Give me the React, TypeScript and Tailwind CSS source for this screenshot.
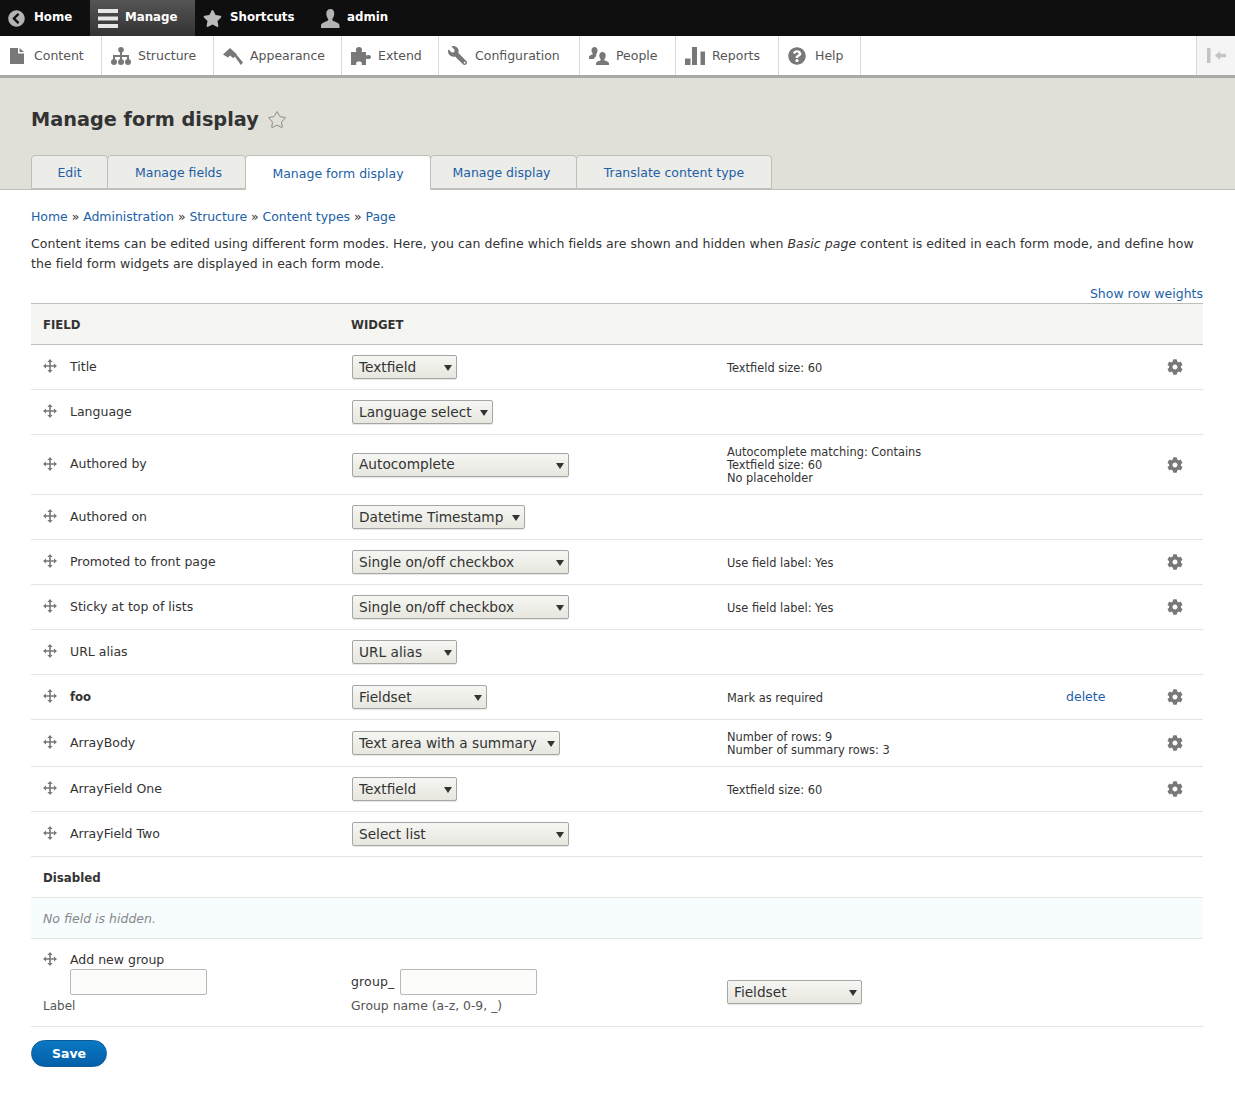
import type { ReactNode } from 'react'
import { Star } from 'lucide-react'
import { FaChevronCircleLeft, FaCog, FaQuestionCircle, FaStar, FaWrench } from 'react-icons/fa'

type Row = {
  name: string
  bold?: boolean
  widget: string
  width: string
  summary?: string[]
  gear?: boolean
  del?: boolean
  height: string
}

const ROWS: Row[] = [
  { name: 'Title', widget: 'Textfield', width: 'w-[105px]', summary: ['Textfield size: 60'], gear: true, height: 'h-[45px]' },
  { name: 'Language', widget: 'Language select', width: 'w-[141px]', height: 'h-[45px]' },
  { name: 'Authored by', widget: 'Autocomplete', width: 'w-[217px]', summary: ['Autocomplete matching: Contains', 'Textfield size: 60', 'No placeholder'], gear: true, height: 'h-[60px]' },
  { name: 'Authored on', widget: 'Datetime Timestamp', width: 'w-[173px]', height: 'h-[45px]' },
  { name: 'Promoted to front page', widget: 'Single on/off checkbox', width: 'w-[217px]', summary: ['Use field label: Yes'], gear: true, height: 'h-[45px]' },
  { name: 'Sticky at top of lists', widget: 'Single on/off checkbox', width: 'w-[217px]', summary: ['Use field label: Yes'], gear: true, height: 'h-[45px]' },
  { name: 'URL alias', widget: 'URL alias', width: 'w-[105px]', height: 'h-[45px]' },
  { name: 'foo', bold: true, widget: 'Fieldset', width: 'w-[135px]', summary: ['Mark as required'], del: true, gear: true, height: 'h-[45px]' },
  { name: 'ArrayBody', widget: 'Text area with a summary', width: 'w-[208px]', summary: ['Number of rows: 9', 'Number of summary rows: 3'], gear: true, height: 'h-[47px]' },
  { name: 'ArrayField One', widget: 'Textfield', width: 'w-[105px]', summary: ['Textfield size: 60'], gear: true, height: 'h-[45px]' },
  { name: 'ArrayField Two', widget: 'Select list', width: 'w-[217px]', height: 'h-[45px]' },
]

const TABS = [
  { label: 'Edit', width: 'w-[77px]' },
  { label: 'Manage fields', width: 'w-[139px] pl-1' },
  { label: 'Manage form display', width: 'w-[186px]', active: true },
  { label: 'Manage display', width: 'w-[147px] pr-1' },
  { label: 'Translate content type', width: 'w-[196px]' },
]

function Handle() {
  return (
    <svg viewBox="0 0 14 14" className="w-[14px] h-[14px] shrink-0 -mt-[2px] text-[#787878]" fill="currentColor">
      <path d="M6.200 3h1.600v3.200H11V4.400L14 7l-3 2.600V7.800H7.800V11h1.800L7 14l-2.600-3h1.800V7.800H3v1.800L0 7l3-2.600v1.800h3.200V3H4.400L7 0l2.600 3z" />
    </svg>
  )
}

function Select({ label, width }: { label: string; width: string }) {
  return (
    <div className={`relative ${width}`}>
      <select
        defaultValue={label}
        className="appearance-none block w-full h-6 pl-[6px] pr-4 border border-[#a6a6a6] rounded-[2px] bg-gradient-to-b from-[#f6f6f3] to-[#e7e7df] text-[13.7px] text-[#333] shadow-[0_1px_1px_rgba(0,0,0,0.1)] [font-family:'DejaVu_Sans',sans-serif]"
      >
        <option>{label}</option>
      </select>
      <span className="absolute right-[5px] top-[10px] w-0 h-0 border-x-[4px] border-x-transparent border-t-[6px] border-t-[#333]" />
    </div>
  )
}

function NavItem({ label, width, icon }: { label: string; width: string; icon: ReactNode }) {
  return (
    <a className={`flex items-center ${width} h-full pl-[9px] border-r border-[#d9d9d9] text-[12.5px] text-[#555]`}>
      <span className="flex items-center w-5 h-5 mr-[7px] shrink-0 text-[#787878]">{icon}</span>
      <span className="pt-px">{label}</span>
    </a>
  )
}

export default function App() {
  return (
    <div className="w-[1235px] min-h-[1109px] bg-white text-[#333] text-[12.5px] [font-family:'DejaVu_Sans',sans-serif]">
      {/* Top bar */}
      <div className="flex h-9 bg-[#0f0f0f] text-white font-bold text-[11.8px]">
        <a className="flex items-center w-[90px] pl-2">
          <FaChevronCircleLeft size={17} className="text-[#b3b3b3] mr-[9px]" />
          Home
        </a>
        <a className="flex items-center w-[105px] pl-2 bg-gradient-to-b from-[#555] to-[#333]">
          <svg viewBox="0 0 20 19" className="w-5 h-[19px] mr-[7px] text-[#e6e6e6]" fill="currentColor">
            <path d="M0 0h20v4H0zM0 7.500h20v4H0zM0 15h20v4H0z" />
          </svg>
          Manage
        </a>
        <a className="flex items-center w-[113px] pl-2">
          <FaStar size={19} className="text-[#bbb] mr-2" />
          Shortcuts
        </a>
        <a className="flex items-center pl-[13px]">
          <svg viewBox="0 0 19 19" className="w-[19px] h-[19px] mr-[7px] text-[#b3b3b3]" fill="currentColor">
            <path d="M9.500 0c2.400 0 3.700 1.700 3.700 4.500 0 2.400-1 4.200-1.800 5.400-.5.900.2 1.800 1.500 2.300 2.900 1.100 5.100 2 5.600 3.800v3H0v-3c.5-1.800 2.700-2.700 5.600-3.800 1.300-.5 2-1.400 1.500-2.300C6.300 8.700 5.300 6.900 5.300 4.500 5.300 1.700 7.100 0 9.500 0z" />
          </svg>
          admin
        </a>
      </div>

      {/* Admin menu */}
      <div className="flex h-[42px] bg-white border-b-[3px] border-[#a9a9a6]">
        <a className="flex items-center w-[102px] h-full pl-[10px] border-r border-[#d9d9d9] text-[12.5px] text-[#555]">
          <svg viewBox="0 0 14 16" className="w-[14px] h-4 mr-[10px] text-[#787878]" fill="currentColor">
            <path d="M0 0h8v5.500h6V16H0zM9.500 0L14 4h-4.500z" />
          </svg>
          <span className="pt-px">Content</span>
        </a>
        <NavItem
          label="Structure"
          width="w-[112px]"
          icon={
            <svg viewBox="0 0 20 18" className="w-5 h-[18px]" fill="currentColor">
              <circle cx="10" cy="2.800" r="2.800" />
              <path d="M9 4h2v4h7v5h-2v-3h-5v3H9v-3H4v3H2V8h7z" />
              <circle cx="3" cy="15" r="3" />
              <circle cx="10" cy="15" r="3" />
              <circle cx="17" cy="15" r="3" />
            </svg>
          }
        />
        <NavItem
          label="Appearance"
          width="w-[128px]"
          icon={
            <svg viewBox="0 0 20 18" className="w-5 h-[18px]" fill="currentColor">
              <path d="M0 7.500L7 1l7 6.500-3.800 3.800-3-2.800-2.200 2z" />
              <path d="M11.800 9.500l1.800-1.700L20 15.500 17.800 18z" />
            </svg>
          }
        />
        <NavItem
          label="Extend"
          width="w-[97px]"
          icon={
            <svg viewBox="0 0 20 18" className="w-5 h-[18px]" fill="currentColor">
              <path d="M0 5h5.500C4.500 3.500 4.500 0 8 0s3.500 3.500 2.500 5H15v3.500c1.500-1 5-.8 5 1.500s-3.500 2.500-5 1.500V18h-4.500c.8-1.500.5-3.500-2.500-3.500S4.700 16.500 5.500 18H0z" />
            </svg>
          }
        />
        <NavItem label="Configuration" width="w-[141px]" icon={<FaWrench size={19} className="-scale-x-100" />} />
        <NavItem
          label="People"
          width="w-[96px]"
          icon={
            <svg viewBox="0 0 20 18" className="w-5 h-[18px]" fill="currentColor">
              <path d="M5.500 0C7.500 0 8.500 1.500 8.500 3.500c0 1.800-.8 3-1.400 3.900-.3.500-.1 1 .5 1.300C6.500 9.600 5.500 10.500 5 12H0V9.800c.3-1 1.500-1.500 3.300-2.200.5-.2.600-.7.300-1.200C3 5.500 2.500 4.500 2.500 3.200 2.500 1.300 3.700 0 5.500 0z" />
              <path d="M13.500 5c2 0 3.200 1.400 3.200 3.500 0 1.700-.7 2.900-1.300 3.700-.4.700.1 1.200 1 1.600 2 .8 3.300 1.200 3.600 2.400V18H7v-1.800c.3-1.200 1.600-1.600 3.600-2.400.9-.4 1.400-.9 1-1.600-.6-.8-1.300-2-1.300-3.700C10.300 6.400 11.500 5 13.500 5z" />
            </svg>
          }
        />
        <NavItem
          label="Reports"
          width="w-[103px]"
          icon={
            <svg viewBox="0 0 20 18" className="w-5 h-[18px]" fill="currentColor">
              <path d="M0 11.500h5.500V18H0zM7 0h5v18H7zM15.500 4.500H20V18h-4.500z" />
            </svg>
          }
        />
        <NavItem label="Help" width="w-[82px]" icon={<FaQuestionCircle size={18} />} />
        <div className="ml-auto flex items-center justify-center w-[39px] h-full bg-[#f5f5f5] border-l border-[#d9d9d9]">
          <svg viewBox="0 0 19 15" className="w-[19px] h-[15px] text-[#c4c4c4]" fill="currentColor">
            <path d="M0 0h3.500v15H0zM8 7.500L13 3v2.700h6v3.600h-6V12z" />
          </svg>
        </div>
      </div>

      {/* Page header */}
      <div className="h-[112px] bg-[#e0e0d8] border-b border-[#bfbfba] pl-[31px]">
        <h1 className="flex items-center h-[77px] pt-[7px] text-[19.300px] font-bold text-[#333]">
          Manage form display
          <Star size={20} strokeWidth={1} className="ml-2 text-[#777]" />
        </h1>
        <div className="flex h-[35px] text-[12.5px]">
          {TABS.map(t => (
            <a
              key={t.label}
              className={`flex items-center justify-center ${t.width} -mr-px pt-[3px] border border-[#bfbfba] rounded-t-[4px] text-[#1d5fa6] ${
                t.active ? 'relative bg-white border-b-white h-[35px]' : 'bg-[#ecece9] h-[34px]'
              }`}
            >
              {t.label}
            </a>
          ))}
        </div>
      </div>

      {/* Content */}
      <div className="px-[31px] w-[1203px] box-content">
        <div className="w-[1172px]">
          <div className="pt-[17px] text-[#333] leading-5 tracking-[-0.05px]">
            <a className="text-[#1d5fa6]">Home</a> » <a className="text-[#1d5fa6]">Administration</a> » <a className="text-[#1d5fa6]">Structure</a> » <a className="text-[#1d5fa6]">Content types</a> » <a className="text-[#1d5fa6]">Page</a>
          </div>
          <p className="mt-[7px] leading-5 tracking-[0.035px]">
            Content items can be edited using different form modes. Here, you can define which fields are shown and hidden when <em>Basic page</em> content is edited in each form mode, and define how the field form widgets are displayed in each form mode.
          </p>
          <div className="mt-[10px] h-[19px] text-right leading-5 text-[#1d5fa6]">Show row weights</div>

          <div className="grid grid-cols-[308px_376px_1fr] h-[42px] pt-[3px] items-center bg-[#f5f5f2] border-y border-[#bfbfba] font-bold text-[11.7px] text-[#333]">
            <div className="pl-3">FIELD</div>
            <div className="pl-3">WIDGET</div>
          </div>

          {ROWS.map(r => (
            <div key={r.name} className={`grid grid-cols-[308px_376px_339px_100px_49px] items-center ${r.height} border-b border-[#e6e6e1]`}>
              <div className="flex items-center pl-3 gap-[13px]">
                <Handle />
                <span className={r.bold ? 'font-bold text-[11.7px] pt-px' : ''}>{r.name}</span>
              </div>
              <div className="pl-[13px]">
                <Select label={r.widget} width={r.width} />
              </div>
              <div className="pl-3 pt-[2px] text-[11.4px] leading-[13px]">
                {r.summary?.map(s => <div key={s}>{s}</div>)}
              </div>
              <div className="pl-3 text-[#1d5fa6]">{r.del && 'delete'}</div>
              <div className="pl-[13px] text-[#787878]">{r.gear && <FaCog size={16} />}</div>
            </div>
          ))}

          <div className="flex items-center h-[41px] pl-3 pt-[3px] border-b border-[#e6e6e1] font-bold text-[11.8px]">Disabled</div>
          <div className="flex items-center h-[41px] pl-3 pt-[2px] border-b border-[#e6e6e1] bg-[#f7fcff] italic text-[#888]">No field is hidden.</div>

          <div className="grid grid-cols-[308px_376px_1fr] h-[88px] border-b border-[#e6e6e1]">
            <div className="pl-3 pt-3">
              <div className="flex items-center gap-[13px]">
                <Handle />
                <span>Add new group</span>
              </div>
              <input className="block ml-[27px] -mt-px w-[137px] h-[26px] bg-[#fcfcfa] border border-[#b8b8b8] rounded-[2px]" />
              <div className="mt-[2px] text-[12px] text-[#555]">Label</div>
            </div>
            <div className="pl-3 pt-[30px]">
              <div className="flex items-center gap-[6px] tracking-[0.15px]">
                group_
                <input className="w-[137px] h-[26px] bg-[#fcfcfa] border border-[#b8b8b8] rounded-[2px]" />
              </div>
              <div className="mt-[2px] text-[12.4px] text-[#555]">Group name (a-z, 0-9, _)</div>
            </div>
            <div className="pl-3 pt-[41px]">
              <Select label="Fieldset" width="w-[135px]" />
            </div>
          </div>

          <button className="mt-[13px] w-[76px] h-[27px] pt-px rounded-full bg-gradient-to-b from-[#0a78c4] to-[#0460a8] border border-[#0c5a96] text-white font-bold text-[12.5px]">
            Save
          </button>
        </div>
      </div>
    </div>
  )
}
